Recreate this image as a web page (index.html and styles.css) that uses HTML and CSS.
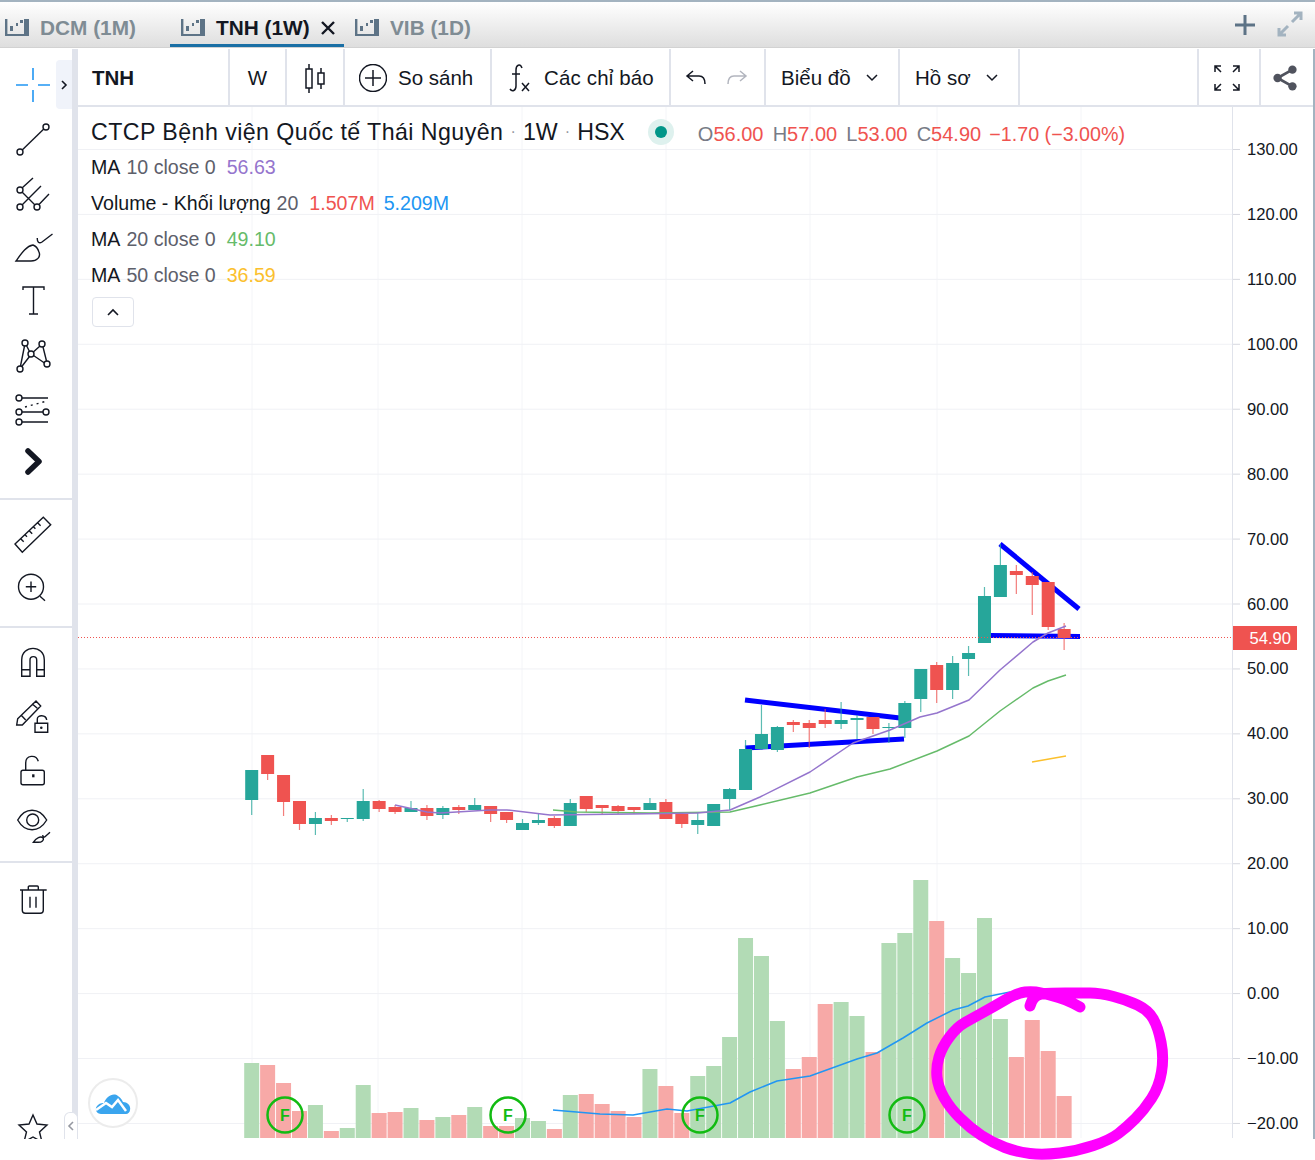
FILE: index.html
```html
<!DOCTYPE html>
<html lang="en">
<head>
    <meta charset="UTF-8">
    <meta name="viewport" content="width=device-width, initial-scale=1.0">
    <title>TNH (1W)</title>
    <link rel="stylesheet" href="styles.css">
</head>
<body>
    <div class="app">
        <!-- Symbol tabs -->
        <div class="tabs">
            <div class="tab tab-dcm">
                <svg class="tab-icon" width="24" height="17" viewBox="0 0 24 17"><path d="M0 0H2.400V15H19V0H24V17H0ZM5 7H8V12H5ZM11 4H13V7H11ZM15 1H18V4H15Z" /></svg>
                <span>DCM (1M)</span>
            </div>
            <div class="tab tab-active">
                <svg class="tab-icon" width="24" height="17" viewBox="0 0 24 17"><path d="M0 0H2.400V15H19V0H24V17H0ZM5 7H8V12H5ZM11 4H13V7H11ZM15 1H18V4H15Z" /></svg>
                <span>TNH (1W)</span>
                <svg class="tab-close" width="16" height="16" viewBox="0 0 16 16"><path d="M2 2L14 14M14 2L2 14" /></svg>
            </div>
            <div class="tab tab-vib">
                <svg class="tab-icon" width="24" height="17" viewBox="0 0 24 17"><path d="M0 0H2.400V15H19V0H24V17H0ZM5 7H8V12H5ZM11 4H13V7H11ZM15 1H18V4H15Z" /></svg>
                <span>VIB (1D)</span>
            </div>
            <svg class="tabs-plus" width="22" height="22" viewBox="0 0 22 22"><path d="M11 1V21M1 11H21" /></svg>
            <svg class="tabs-expand" width="26" height="26" viewBox="0 0 26 26"><path d="M15 11L24 2M17 2H24V9M11 15L2 24M2 17V24H9" /></svg>
        </div>

        <div class="work">
            <!-- Drawing tools -->
            <div class="side">
                <div class="side-group side-group-first">
                    <div class="tool"><svg class="ico" width="36" height="36" viewBox="0 0 36 36"><path class="blue" d="M1 18H13M23 18H35M18 1V13M18 23V35" /></svg></div>
                    <div class="tool"><svg class="ico" width="36" height="36" viewBox="0 0 36 36"><circle cx="5" cy="31" r="3" /><circle cx="31" cy="6" r="3" /><path d="M7.200 29L28.800 8" /></svg></div>
                    <div class="tool"><svg class="ico" width="36" height="36" viewBox="0 0 36 36"><circle cx="5" cy="15" r="3" /><circle cx="5" cy="32" r="3" /><circle cx="22" cy="32" r="3" /><path d="M18 3L7 13M26 11L7 30M34 19L24 29.500M7 17L20 30" /></svg></div>
                    <div class="tool"><svg class="ico" width="36" height="36" viewBox="0 0 36 36"><path d="M1 32H16C22 32 26 28 24 23C23 20 21 17 18 16C11 17 6 25 1 32ZM22.300 9C22 13 24 15 27 13L37.500 5" /></svg></div>
                    <div class="tool"><svg class="ico" width="36" height="36" viewBox="0 0 36 36"><path d="M8 7V4H29V7M18.500 4V31M14 31H23" /></svg></div>
                    <div class="tool"><svg class="ico" width="36" height="36" viewBox="0 0 36 36"><circle cx="10" cy="6" r="3" /><circle cx="27" cy="7" r="3" /><circle cx="16" cy="17" r="3" /><circle cx="5" cy="32" r="3" /><circle cx="32" cy="27" r="3" /><path d="M9.500 9L5.500 29M11.500 8.500L14.500 14.500M18.300 15L25 9M28 10L31.500 24M18.500 18.500L29.500 26M14.500 19.500L6.800 29.500" /></svg></div>
                    <div class="tool"><svg class="ico" width="36" height="36" viewBox="0 0 36 36"><circle cx="4" cy="7" r="3" /><circle cx="4" cy="21" r="3" /><circle cx="31" cy="21" r="3" /><circle cx="4" cy="31" r="3" /><path d="M7 7H33M7 21H28M7 31H33" /><path stroke-dasharray="2 4" d="M10 16L32 10" /></svg></div>
                    <div class="tool"><svg class="ico ico-bold" width="36" height="36" viewBox="0 0 36 36"><path d="M13 6L24 16.500L13 27" /></svg></div>
                </div>
                <div class="side-group">
                    <div class="tool tool-short"><svg class="ico" width="36" height="36" viewBox="0 0 36 36"><path d="M0 27L28.300 0.300L35.700 7.700L7.300 35.300ZM5.700 21.700L8.700 24.700M10 17.700L12 19.700M14.200 13.700L17.200 16.700M18.400 9.700L20.400 11.700M22.600 5.700L25.600 8.700" /></svg></div>
                    <div class="tool tool-short"><svg class="ico" width="36" height="36" viewBox="0 0 36 36"><circle cx="16" cy="16.700" r="12.500" /><path d="M16 11.500V22M10.800 16.700H21.200M25 26.300L30 30.700" /></svg></div>
                </div>
                <div class="side-group">
                    <div class="tool"><svg class="ico" width="36" height="36" viewBox="0 0 36 36"><path d="M6.700 31.300V15C6.700 -0.500 29.300 -0.500 29.300 15V31.300H21.700V15C21.700 10.500 15 10.500 15 15V31.300ZM6.700 24.700H15M21.700 24.700H29.300" /></svg></div>
                    <div class="tool"><svg class="ico" width="36" height="36" viewBox="0 0 36 36"><path d="M2.700 19.700L21 2L25.700 7L7.300 26H1.700ZM17 4.700L22.300 9.300M6 16L10.700 21M20 24.300H32.700V33.300H20ZM22.300 24.300V20C22.300 15.500 31 15.500 31.700 21" /><circle cx="26.300" cy="28.700" r="0.600" /></svg></div>
                    <div class="tool"><svg class="ico" width="36" height="36" viewBox="0 0 36 36"><path d="M8 17.300H27.300C28.500 17.300 29.300 18 29.300 19.300V29.700C29.300 31 28.500 31.700 27.300 31.700H8C6.800 31.700 6 31 6 29.700V19.300C6 18 6.800 17.300 8 17.300ZM10.700 17.300V10C10.700 2 21 1 23.300 8.300" /><path class="slit" d="M18.300 21.300V24.300" /></svg></div>
                    <div class="tool"><svg class="ico" width="36" height="36" viewBox="0 0 36 36"><path d="M2.700 13C10 0 24 0 31.700 13C24 26 10 26 2.700 13Z" /><circle cx="17.700" cy="13" r="6" /><path d="M18.300 35.300H23.300C27 35.300 29 33 28.300 31.300C26 28.500 21 31 18.300 35.300ZM27.700 28C28 30 29 30.500 30 29.700L35 25.300" /></svg></div>
                </div>
                <div class="side-group side-group-last">
                    <div class="tool"><svg class="ico" width="36" height="36" viewBox="0 0 36 36"><path d="M5 8H31.700M7.300 8V28.300C7.300 30.300 8.300 31.300 10.300 31.300H25.300C27.300 31.300 28.300 30.300 28.300 28.300V8M13.300 8V5C13.300 4.300 13.800 4 14.300 4H22.300C22.800 4 23.300 4.300 23.300 5V8M15 14.700V25.700M21 14.700V25.700" /></svg></div>
                    <div class="tool tool-star"><svg class="ico" width="36" height="36" viewBox="0 0 36 36"><path d="M18 5L22 14L32 15L24.500 22L27 32L18 27L9 32L11.500 22L4 15L14 14Z" /></svg></div>
                </div>
                <div class="side-tab"><svg width="8" height="12" viewBox="0 0 8 12"><path d="M2 2L6 6L2 10" /></svg></div>
            </div>
            <div class="side-toggle"><svg width="8" height="12" viewBox="0 0 8 12"><path d="M6 2L2 6L6 10" /></svg></div>

            <div class="main">
                <!-- Chart toolbar -->
                <div class="topbar">
                    <div class="cell cell-symbol">TNH</div>
                    <div class="cell cell-res">W</div>
                    <div class="cell cell-type">
                        <svg class="ico-bar" width="22" height="30" viewBox="0 0 22 30"><path d="M5 1V6M5 25V30M17 5V10M17 21V26M2 6H8V25H2ZM14 10H20V21H14Z" /></svg>
                    </div>
                    <div class="cell cell-compare">
                        <svg class="ico-bar" width="28" height="28" viewBox="0 0 28 28"><circle cx="14" cy="14" r="13.500" /><path d="M14 6V22M6 14H22" /></svg>
                        <span>So sánh</span>
                    </div>
                    <div class="cell cell-indicators">
                        <svg class="ico-bar" width="22" height="30" viewBox="0 0 22 30"><path d="M13 5C11 0 7 2 7 7V23C7 28 3 29 1 26M3 11H11M13 20L20 28M20 20L13 28" /></svg>
                        <span>Các chỉ báo</span>
                    </div>
                    <div class="cell cell-undo">
                        <svg class="ico-bar" width="22" height="18" viewBox="0 0 22 18"><path d="M8 2L2 7L8 12M2 7H14C18 7 20 10 20 15" /></svg>
                        <svg class="ico-bar ico-off" width="22" height="18" viewBox="0 0 22 18"><path d="M14 2L20 7L14 12M20 7H8C4 7 2 10 2 15" /></svg>
                    </div>
                    <div class="cell cell-chart">
                        <span>Biểu đồ</span>
                        <svg class="ico-bar" width="12" height="8" viewBox="0 0 12 8"><path d="M1 1L6 6L11 1" /></svg>
                    </div>
                    <div class="cell cell-profile">
                        <span>Hồ sơ</span>
                        <svg class="ico-bar" width="12" height="8" viewBox="0 0 12 8"><path d="M1 1L6 6L11 1" /></svg>
                    </div>
                    <div class="cell cell-spacer"></div>
                    <div class="cell cell-full">
                        <svg class="ico-bar" width="26" height="26" viewBox="0 0 26 26"><path d="M1 7V1H7M1 1L7 7M19 1H25V7M25 1L19 7M1 19V25H7M1 25L7 19M19 25H25V19M25 25L19 19" /></svg>
                    </div>
                    <div class="cell cell-share">
                        <svg class="ico-share" width="26" height="26" viewBox="0 0 28 28"><circle cx="22" cy="5" r="4.500" /><circle cx="6" cy="14" r="4.500" /><circle cx="22" cy="23" r="4.500" /><path d="M22 5L6 14L22 23" /></svg>
                    </div>
                </div>

                <div class="chart">
                    <svg id="chart" class="chart-svg" width="1235" height="1031" viewBox="78 107 1235 1031"></svg>

                    <!-- Legend sits over the chart -->
                    <div class="legend">
                        <div class="legend-title">
                            <span class="legend-name">CTCP Bệnh viện Quốc tế Thái Nguyên</span>
                            <i class="sep">·</i>
                            <span>1W</span>
                            <i class="sep">·</i>
                            <span>HSX</span>
                            <b class="status"><b></b></b>
                            <span class="ohlc">
                                <em>O</em>56.00 <em>H</em>57.00 <em>L</em>53.00 <em>C</em>54.90 <u>−1.70 (−3.00%)</u>
                            </span>
                        </div>
                        <div class="legend-row">MA <em>10 close 0</em> <span class="v-purple">56.63</span></div>
                        <div class="legend-row">Volume - Khối lượng <em>20</em> <span class="v-red">1.507M</span> <span class="v-blue">5.209M</span></div>
                        <div class="legend-row">MA <em>20 close 0</em> <span class="v-green">49.10</span></div>
                        <div class="legend-row">MA <em>50 close 0</em> <span class="v-yellow">36.59</span></div>
                        <div class="legend-toggle"><svg width="14" height="9" viewBox="0 0 14 9"><path d="M2 7L7 2L12 7" /></svg></div>
                    </div>

                    <div class="logo">
                        <svg width="36" height="24" viewBox="0 0 36 24"><path class="logo-cloud" d="M6 23C1 23 -1 17 3 14C5 12 8 12 9 12C11 6 18 1 23 5C26 7 27 9 28 11C33 11 36 15 35 19C35 21 33 23 31 23Z" /><path class="logo-zig" d="M1 19L11 12L17 16L23 9L31 20" /></svg>
                    </div>
                </div>
            </div>
        </div>

        <!-- Hand-drawn circle goes over everything -->
        <svg id="ink" class="ink" width="1315" height="1160" viewBox="0 0 1315 1160"></svg>
    </div>
    <script src="chart.js"></script>
</body>
</html>
```

FILE: styles.css
```css
body { margin: 0; background: #fff; font-family: "Liberation Sans", Arial, sans-serif; color: #131722; }
.app { position: relative; width: 1315px; height: 1160px; overflow: hidden; }

/* tabs */
.tabs { display: flex; align-items: stretch; height: 45px; padding-left: 5px; border-top: 2px solid #a3b3c0; border-bottom: 1px solid #d2d2d2; background: linear-gradient(#fff, #dedede); box-sizing: content-box; }
.tab { display: flex; align-items: center; font-size: 20.8px; font-weight: bold; color: #7f8c94; height: 45px; padding-top: 6px; box-sizing: border-box; }
.tab-icon { flex: none; margin-right: 11px; }
.tab-icon path { fill: #5d7386; }
.tab-dcm { width: 165px; }
.tab-active { width: 174px; padding: 9px 0 0 11px; color: #131722; border-bottom: 3px solid #1a6fa5; }
.tab-close { margin-left: 10px; }
.tab-close path { fill: none; stroke: #131722; stroke-width: 2.4; }
.tab-vib { margin-left: 11px; }
.tabs-plus { margin: 12px 0 0 auto; }
.tabs-plus path { fill: none; stroke: #5d7386; stroke-width: 3; }
.tabs-expand { margin: 9px 12px 0 21px; }
.tabs-expand path { fill: none; stroke: #a3b3c0; stroke-width: 3; }

/* sidebar and main */
.work { display: flex; position: relative; height: 1090px; margin-top: 1px; border-right: 2px solid #a3b3c0; }
.side { position: relative; display: flex; flex-direction: column; flex: none; width: 72px; border-right: 6px solid #e0e3eb; overflow: hidden; }
.side-group { padding-top: 8px; border-bottom: 2px solid #e0e3eb; }
.side-group-first { height: 451px; padding-top: 9px; box-sizing: border-box; }
.side-group:nth-child(2) { height: 128px; box-sizing: border-box; }
.side-group:nth-child(3) { height: 235px; box-sizing: border-box; }
.side-group-last { flex: 1; display: flex; flex-direction: column; padding-top: 10px; border-bottom: none; }
.tool { display: flex; align-items: center; justify-content: center; width: 66px; height: 54px; }
.tool-short { height: 53px; }
.tool-star { margin-top: auto; margin-bottom: -16px; }
.ico { overflow: visible; }
.ico path, .ico circle { fill: none; stroke: #131722; stroke-width: 1.4; }
.ico path.blue { stroke: #2196f3; stroke-width: 1.6; }
.ico path.slit { stroke-width: 2.4; }
.ico-bold path { stroke-width: 5.5; stroke-linecap: round; stroke-linejoin: round; }
.side-tab { position: absolute; left: 56px; top: 11px; display: flex; align-items: center; justify-content: center; width: 16px; height: 49px; background: #f0f3fa; border-radius: 4px 0 0 4px; }
.side-tab path, .side-toggle path, .legend-toggle path { fill: none; stroke: #131722; stroke-width: 1.6; }
.side-toggle { position: absolute; left: 64px; top: 1063px; display: flex; align-items: center; justify-content: center; width: 14px; height: 27px; background: #fff; border: 1px solid #e0e3eb; border-bottom: none; border-radius: 6px 6px 0 0; box-sizing: border-box; }
.side-toggle path { stroke: #9598a1; }
.main { display: flex; flex-direction: column; flex: 1; min-width: 0; }

/* toolbar */
.topbar { display: flex; flex: none; height: 58px; border-bottom: 2px solid #e0e3eb; box-sizing: border-box; font-size: 20.5px; }
.cell { display: flex; align-items: center; height: 56px; padding-top: 2px; border-right: 2px solid #e0e3eb; box-sizing: border-box; }
.cell-symbol { width: 152px; padding-left: 14px; font-weight: bold; }
.cell-res { width: 57px; justify-content: center; }
.cell-type { width: 58px; justify-content: center; }
.cell-compare { width: 147px; padding-left: 14px; gap: 11px; }
.cell-indicators { width: 179px; padding-left: 17px; gap: 13px; letter-spacing: 0.15px; }
.cell-undo { width: 95px; padding-left: 14px; gap: 19px; }
.cell-chart { width: 134px; padding-left: 15px; gap: 15px; }
.cell-profile { width: 120px; padding-left: 15px; gap: 15px; }
.cell-spacer { width: 179px; }
.cell-full { width: 62px; justify-content: center; padding-right: 4px; }
.cell-share { flex: 1; justify-content: center; padding-right: 4px; border-right: none; }
.ico-bar path, .ico-bar circle { fill: none; stroke: #131722; stroke-width: 1.5; }
.ico-off path { stroke: #b2b5be; }
.ico-share circle { fill: #50535e; }
.ico-share path { fill: none; stroke: #50535e; stroke-width: 3; }

/* chart pane */
.chart { position: relative; flex: 1; overflow: hidden; }
.chart-svg { display: block; }
.axis-label { font-family: "Liberation Sans", Arial, sans-serif; font-size: 16.6px; fill: #131722; }
.price-label { font-family: "Liberation Sans", Arial, sans-serif; font-size: 16.6px; fill: #fff; }
.event-label { font-family: "Liberation Sans", Arial, sans-serif; font-size: 16px; font-weight: bold; fill: #12bb12; }

.legend { position: absolute; left: 13px; top: 8px; font-size: 19.6px; white-space: nowrap; }
.legend em { font-style: normal; color: #5d606b; }
.legend-title { display: flex; align-items: center; height: 34px; font-size: 23.2px; }
.legend-name { letter-spacing: 0.44px; }
.sep { font-style: normal; width: 19.5px; text-align: center; color: #9598a1; font-size: 16px; }
.status { display: flex; align-items: center; justify-content: center; width: 26px; height: 26px; margin-left: 23px; border-radius: 50%; background: #def1ee; }
.status b { width: 12px; height: 12px; border-radius: 50%; background: #009688; }
.ohlc { margin: 4px 0 0 24px; font-size: 20px; word-spacing: 3.6px; color: #ef5350; }
.ohlc em { color: #787b86; }
.ohlc u { text-decoration: none; margin-left: -1px; font-size: 19.7px; word-spacing: 0; }
.legend-row { display: flex; align-items: center; gap: 6px; height: 36px; }
.legend-row span { margin-left: 5px; }
.legend-row span + span { margin-left: 3px; }
.v-purple { color: #9575cd; }
.v-red { color: #ef5350; }
.v-blue { color: #2196f3; }
.v-green { color: #66bb6a; }
.v-yellow { color: #fbc02d; }
.legend-toggle { display: flex; align-items: center; justify-content: center; width: 42px; height: 30px; margin: 4px 0 0 1px; border: 1px solid #e0e3eb; border-radius: 4px; box-sizing: border-box; background: #fff; }
.logo { position: absolute; left: 10px; top: 971px; display: flex; align-items: center; justify-content: center; width: 50px; height: 50px; border: 2px solid #ececec; border-radius: 50%; background: #fff; box-sizing: border-box; }
.logo-cloud { fill: #3aa5ee; }
.logo-zig { fill: none; stroke: #fff; stroke-width: 2.5; }

.ink { position: absolute; left: 0; top: 0; pointer-events: none; }
```

FILE: chart.js
```js
// Candles are stored as pixel rows: [color, bodyTop, bodyBottom, wickTop, wickBottom]
var candles = [
    ['g', 770, 800, 770, 815], ['r', 755, 774, 755, 780], ['r', 775, 802, 775, 816], ['r', 801, 824, 801, 830],
    ['g', 818, 824, 812, 835], ['r', 818, 821, 815, 825], ['g', 818, 819, 818, 822], ['g', 801, 819, 789, 821],
    ['r', 801, 809, 800, 812], ['r', 807, 812, 805, 814], ['g', 808, 812, 801, 812], ['r', 808, 816, 805, 820],
    ['g', 808, 815, 806, 819], ['r', 807, 810, 805, 814], ['g', 805, 810, 798, 810], ['r', 806, 814, 806, 822],
    ['r', 812, 820, 812, 823], ['g', 823, 830, 819, 830], ['g', 820, 823, 814, 825], ['r', 818, 826, 816, 828],
    ['g', 803, 826, 799, 826], ['r', 796, 809, 796, 812], ['r', 805, 808, 805, 814], ['r', 806, 811, 805, 814],
    ['r', 807, 810, 807, 814], ['g', 803, 810, 798, 810], ['r', 802, 819, 799, 819], ['r', 814, 824, 814, 828],
    ['g', 820, 825, 812, 834], ['g', 804, 826, 804, 826], ['g', 789, 799, 788, 810], ['g', 749, 790, 740, 790],
    ['g', 734, 749, 705, 750], ['g', 727, 750, 726, 752], ['r', 722, 725, 720, 732], ['r', 723, 728, 720, 748],
    ['r', 720, 724, 709, 728], ['g', 720, 724, 702, 729], ['g', 718, 720, 715, 739], ['r', 717, 729, 717, 734],
    ['g', 727, 728, 723, 743], ['g', 703, 728, 701, 738], ['g', 669, 699, 669, 712], ['r', 665, 690, 662, 703],
    ['g', 663, 690, 656, 699], ['g', 653, 659, 646, 676], ['g', 596, 643, 587, 643], ['g', 565, 597, 544, 597],
    ['r', 571, 575, 565, 594], ['r', 576, 585, 572, 615], ['r', 582, 627, 582, 630], ['r', 629, 638, 623, 650]
];

// Top pixel of each volume bar, same order as the candles
var volumes = [
    1063, 1065, 1083, 1111, 1105, 1131, 1128, 1085, 1113, 1112, 1108, 1120, 1117, 1115, 1107, 1126, 1126, 1118,
    1121, 1129, 1095, 1094, 1104, 1111, 1117, 1069, 1086, 1113, 1076, 1066, 1037, 938, 956, 1021, 1069, 1057,
    1004, 1002, 1016, 1052, 943, 933, 880, 921, 958, 973, 918, 1019, 1057, 1020, 1051, 1096
];

var ma10 = [[395, 805], [427, 812], [440, 813], [490, 810], [507, 810], [550, 815], [630, 814], [697, 813], [730, 810], [760, 797], [810, 772], [853, 743], [890, 730], [920, 717], [937, 713], [969, 700], [1000, 670], [1033, 642], [1048, 633], [1066, 626]];
var ma20 = [[553, 810], [577, 812], [650, 813], [730, 812], [760, 805], [810, 793], [857, 777], [890, 769], [937, 751], [969, 736], [1000, 711], [1033, 688], [1048, 681], [1066, 675]];
var ma50 = [[1032, 762], [1066, 756]];
var volMa = [[553, 1110], [600, 1114], [633, 1115], [667, 1109], [687, 1111], [730, 1103], [750, 1092], [777, 1081], [810, 1076], [857, 1059], [877, 1053], [903, 1038], [927, 1023], [953, 1010], [968, 1006], [985, 997], [1010, 992]];

var inkPoints = [[1030, 1006], [1033, 995], [1050, 993], [1080, 993], [1100, 993], [1127, 1000], [1148, 1010], [1158, 1027], [1164, 1057], [1159, 1087], [1144, 1110], [1127, 1127], [1110, 1140], [1077, 1151], [1043, 1155], [1017, 1152], [993, 1143], [970, 1128], [950, 1108], [938, 1087], [936, 1067], [942, 1047], [957, 1027], [973, 1018], [993, 1007], [1017, 993], [1033, 991], [1050, 995], [1067, 1000], [1080, 1007]];

var GREEN = '#26a69a', RED = '#ef5350';
var svgNs = 'http://www.w3.org/2000/svg';

function add(parent, tag, attrs, text) {
    var el = document.createElementNS(svgNs, tag);
    for (var key in attrs) el.setAttribute(key, attrs[key]);
    if (text) el.textContent = text;
    parent.appendChild(el);
    return el;
}

function line(parent, x1, y1, x2, y2, stroke, width) {
    return add(parent, 'line', { x1: x1, y1: y1, x2: x2, y2: y2, stroke: stroke, 'stroke-width': width });
}

function poly(parent, points, stroke, width) {
    add(parent, 'polyline', {
        points: points.map(function (p) { return p.join(','); }).join(' '),
        fill: 'none', stroke: stroke, 'stroke-width': width, 'stroke-linejoin': 'round'
    });
}

function candleX(i) { return 251.7 + i * 15.93; }

var chart = document.getElementById('chart');

// grid
[252, 378, 522, 666, 810, 937, 1081].forEach(function (x) {
    line(chart, x, 107, x, 1138, '#f4f5f8', 1);
});
var labels = ['130.00', '120.00', '110.00', '100.00', '90.00', '80.00', '70.00', '60.00', '50.00', '40.00', '30.00', '20.00', '10.00', '0.00', '−10.00', '−20.00'];
labels.forEach(function (label, i) {
    var y = 149.5 + i * 64.93;
    line(chart, 78, y, 1232, y, '#f0f1f5', 1);
    line(chart, 1232, y, 1240, y, '#d6d8df', 1);
    add(chart, 'text', { x: 1247, y: y + 5.5, 'class': 'axis-label' }, label);
});
line(chart, 1232.5, 107, 1232.5, 1138, '#e0e3eb', 1);

// volume bars
volumes.forEach(function (top, i) {
    add(chart, 'rect', {
        x: candleX(i) - 7.5, y: top, width: 15, height: 1138 - top,
        fill: candles[i][0] === 'g' ? '#b2dbb5' : '#f7a9a7'
    });
});
poly(chart, volMa, '#2196f3', 1.5);

// hand-drawn blue trend lines stay below the candles
[[745, 700, 900, 718], [745, 748, 904, 739], [1000, 544, 1079, 609], [990, 635.5, 1080, 636.5]].forEach(function (l) {
    line(chart, l[0], l[1], l[2], l[3], '#0000ff', 5);
});

candles.forEach(function (c, i) {
    var x = candleX(i), color = c[0] === 'g' ? GREEN : RED;
    line(chart, x, c[3], x, c[4], color, 1.2).setAttribute('opacity', '0.75');
    add(chart, 'rect', { x: x - 6.5, y: c[1], width: 13, height: c[2] - c[1], fill: color });
});

poly(chart, ma20, '#66bb6a', 1.5);
poly(chart, ma10, '#9575cd', 1.5);
poly(chart, ma50, '#fbc02d', 1.5);

// last price line and tag
add(chart, 'line', { x1: 78, y1: 637.5, x2: 1232, y2: 637.5, stroke: '#ef5350', 'stroke-width': 1, 'stroke-dasharray': '1 2' });
add(chart, 'rect', { x: 1233, y: 626, width: 64, height: 24, fill: '#ef5350' });
add(chart, 'text', { x: 1291, y: 643.5, 'text-anchor': 'end', 'class': 'price-label' }, '54.90');

// F markers on the volume pane
[285, 508, 700, 907].forEach(function (x) {
    add(chart, 'circle', { cx: x, cy: 1115, r: 17.5, fill: 'none', stroke: '#12bb12', 'stroke-width': 2.5 });
    add(chart, 'text', { x: x, y: 1121, 'text-anchor': 'middle', 'class': 'event-label' }, 'F');
});

// magenta circle, smoothed through the midpoints
var ink = document.getElementById('ink');
var d = 'M' + inkPoints[0].join(' ');
for (var i = 1; i < inkPoints.length - 1; i++) {
    var p = inkPoints[i], next = inkPoints[i + 1];
    d += ' Q' + p[0] + ' ' + p[1] + ' ' + (p[0] + next[0]) / 2 + ' ' + (p[1] + next[1]) / 2;
}
d += ' L' + inkPoints[inkPoints.length - 1].join(' ');
add(ink, 'path', { d: d, fill: 'none', stroke: '#ff00ff', 'stroke-width': 11, 'stroke-linecap': 'round', 'stroke-linejoin': 'round' });
```
